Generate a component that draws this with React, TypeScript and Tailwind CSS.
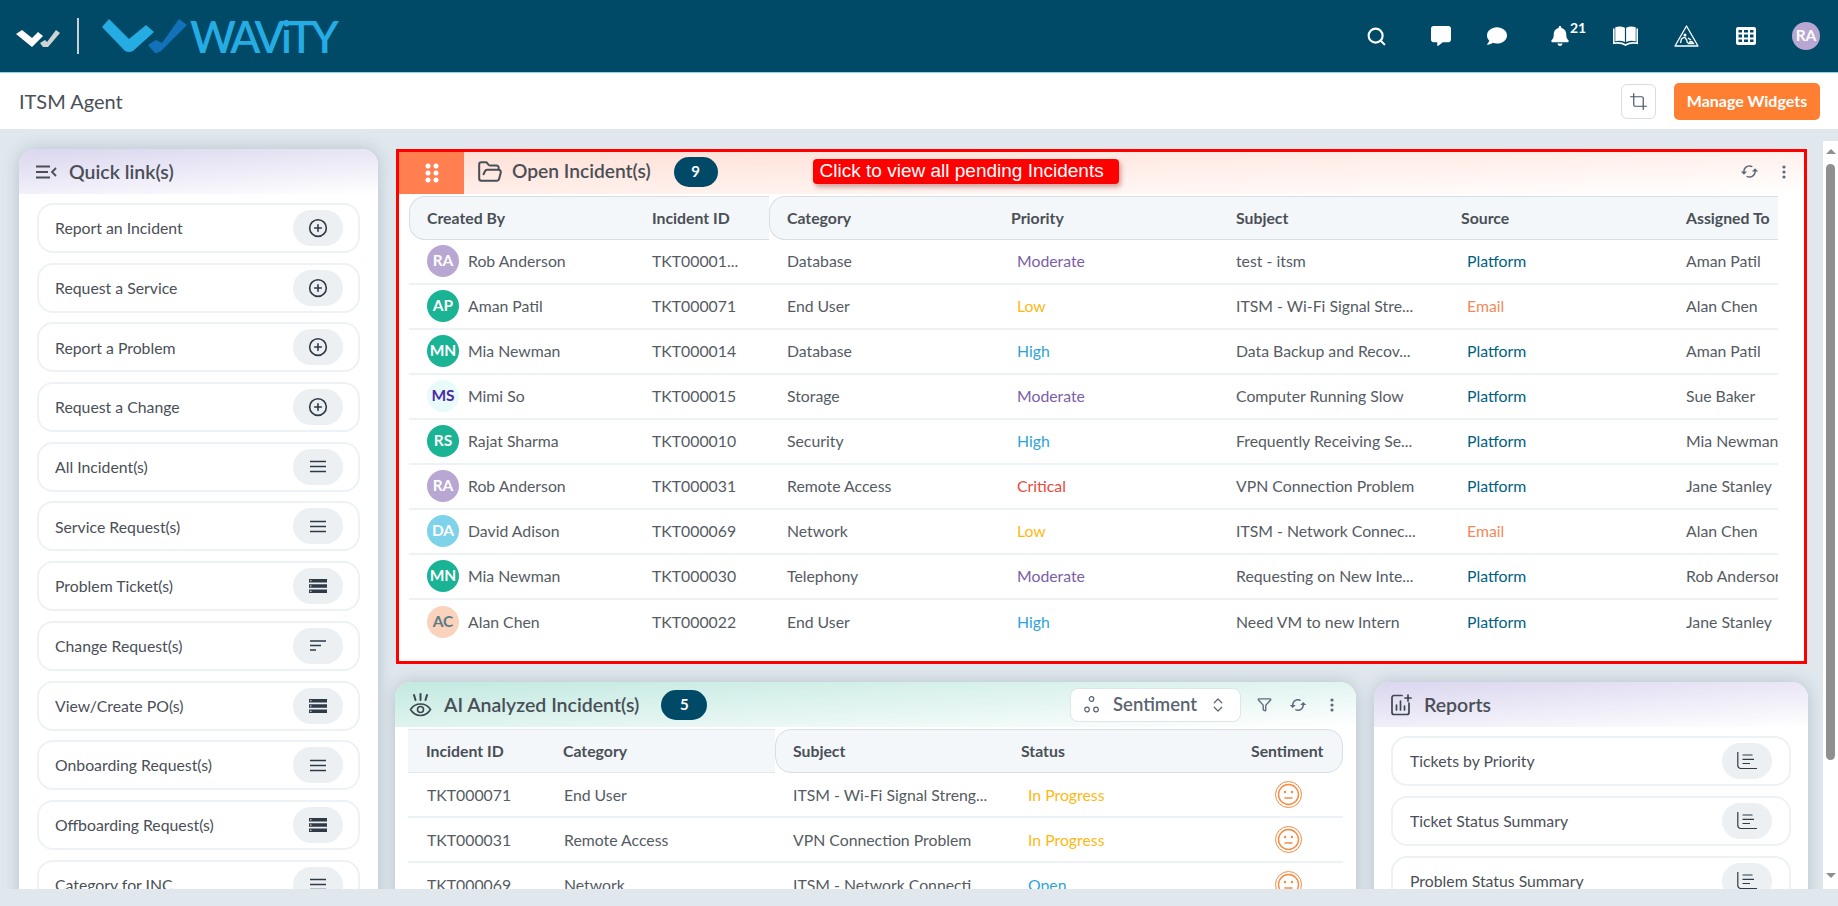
import { ChevronsUpDown, CirclePlus, Crop, Filter, FolderOpen, Search } from "lucide-react";
import { FaBell, FaComment, FaCommentAlt } from "react-icons/fa";
import { MdCached } from "react-icons/md";

type IconKind = "plus" | "menu" | "server" | "sort" | "chart";

const quickLinks: { label: string; icon: IconKind }[] = [
  { label: "Report an Incident", icon: "plus" },
  { label: "Request a Service", icon: "plus" },
  { label: "Report a Problem", icon: "plus" },
  { label: "Request a Change", icon: "plus" },
  { label: "All Incident(s)", icon: "menu" },
  { label: "Service Request(s)", icon: "menu" },
  { label: "Problem Ticket(s)", icon: "server" },
  { label: "Change Request(s)", icon: "sort" },
  { label: "View/Create PO(s)", icon: "server" },
  { label: "Onboarding Request(s)", icon: "menu" },
  { label: "Offboarding Request(s)", icon: "server" },
  { label: "Category for INC", icon: "menu" },
];

const avatarStyles: Record<string, string> = {
  RA: "bg-[#b7a7d2] text-white",
  AP: "bg-[#1ab394] text-white",
  MN: "bg-[#1ab394] text-white",
  RS: "bg-[#1ab394] text-white",
  MS: "bg-[#e8fbfa] text-[#4b2aa5]",
  DA: "bg-[#7ed3ea] text-white",
  AC: "bg-[#fbd3bd] text-[#5d7a86]",
};

const priorityColors: Record<string, string> = {
  Moderate: "text-[#7b5ea7]",
  Low: "text-[#fdb913]",
  High: "text-[#2fa3d9]",
  Critical: "text-[#e64a3e]",
};

const incidents = [
  ["RA", "Rob Anderson", "TKT00001...", "Database", "Moderate", "test - itsm", "Platform", "Aman Patil"],
  ["AP", "Aman Patil", "TKT000071", "End User", "Low", "ITSM - Wi-Fi Signal Stre...", "Email", "Alan Chen"],
  ["MN", "Mia Newman", "TKT000014", "Database", "High", "Data Backup and Recov...", "Platform", "Aman Patil"],
  ["MS", "Mimi So", "TKT000015", "Storage", "Moderate", "Computer Running Slow", "Platform", "Sue Baker"],
  ["RS", "Rajat Sharma", "TKT000010", "Security", "High", "Frequently Receiving Se...", "Platform", "Mia Newman"],
  ["RA", "Rob Anderson", "TKT000031", "Remote Access", "Critical", "VPN Connection Problem", "Platform", "Jane Stanley"],
  ["DA", "David Adison", "TKT000069", "Network", "Low", "ITSM - Network Connec...", "Email", "Alan Chen"],
  ["MN", "Mia Newman", "TKT000030", "Telephony", "Moderate", "Requesting on New Inte...", "Platform", "Rob Anderson"],
  ["AC", "Alan Chen", "TKT000022", "End User", "High", "Need VM to new Intern", "Platform", "Jane Stanley"],
];

const analyzed = [
  ["TKT000071", "End User", "ITSM - Wi-Fi Signal Streng...", "In Progress"],
  ["TKT000031", "Remote Access", "VPN Connection Problem", "In Progress"],
  ["TKT000069", "Network", "ITSM - Network Connecti...", "Open"],
];

const reports = ["Tickets by Priority", "Ticket Status Summary", "Problem Status Summary"];

function MenuIcon() {
  return (
    <svg width="16" height="13" viewBox="0 0 16 13" stroke="#2f3a47" strokeWidth="1.6">
      <path d="M0 1.500h16M0 6.500h16M0 11.500h16" />
    </svg>
  );
}

function ServerIcon() {
  return (
    <svg width="18" height="14" viewBox="0 0 18 14" fill="#2f3a47">
      <path d="M0 0h18v3.600H0zM0 5.200h18v3.600H0zM0 10.400h18V14H0z" />
      <path d="M1 1.300h1.500v1H1zM1 6.500h1.500v1H1zM1 11.700h1.500v1H1z" fill="#ecf0f3" />
    </svg>
  );
}

function SortIcon() {
  return (
    <svg width="16" height="11" viewBox="0 0 16 11" stroke="#2f3a47" strokeWidth="1.500">
      <path d="M0 1h16M0 5.500h11M0 10h6" />
    </svg>
  );
}

function ChartIcon() {
  return (
    <svg width="20" height="18" viewBox="0 0 20 18" fill="none" stroke="#2f3a47" strokeWidth="1.200">
      <path d="M.8 0v13.500a3 3 0 0 0 3 3H20" />
      <path d="M5.500 3h10M5.500 7.300h11.500M5.500 11.500h7.500" />
    </svg>
  );
}

function PillIcon({ kind }: { kind: IconKind }) {
  return (
    <span className="flex h-[36px] w-[50px] items-center justify-center rounded-[18px] bg-[#ecf0f3] text-[#2f3a47]">
      {kind === "plus" && <CirclePlus size={20} strokeWidth={1.9} />}
      {kind === "menu" && <MenuIcon />}
      {kind === "server" && <ServerIcon />}
      {kind === "sort" && <SortIcon />}
      {kind === "chart" && <ChartIcon />}
    </span>
  );
}

function LinkItem({ label, icon, pad }: { label: string; icon: IconKind; pad: string }) {
  return (
    <div className={`flex h-[50px] shrink-0 items-center justify-between rounded-[16px] border-2 border-[#edf2f6] bg-white ${pad}`}>
      <span className="text-[15.8px] text-[#4a4f57]">{label}</span>
      <PillIcon kind={icon} />
    </div>
  );
}

function Kebab() {
  return (
    <svg width="4" height="14" viewBox="0 0 4 14" fill="#5c6b7a">
      <circle cx="2" cy="2" r="1.600" />
      <circle cx="2" cy="7" r="1.600" />
      <circle cx="2" cy="12" r="1.600" />
    </svg>
  );
}

function CountBadge({ value, width }: { value: number; width: string }) {
  return (
    <span className={`flex h-[30px] items-center justify-center rounded-[15px] bg-[#004a68] text-[15px] font-bold text-white ${width}`}>
      {value}
    </span>
  );
}

function Logo() {
  return (
    <div className="flex items-center">
      <svg width="44" height="18" viewBox="0 0 44 18" className="mt-[3px] ml-[16px]">
        <path d="M0 5l6-4 10 8 6-6 5 4-11 11z" fill="#ffffff" />
        <path d="M24 14l5-3 2 2 9-12 4 3-12 14h-5z" fill="#d0d3d4" />
      </svg>
      <div className="ml-[17px] h-[36px] w-[2px] bg-[#c9cfd2]" />
      <svg width="86" height="36" viewBox="0 0 86 36" className="ml-[22px]">
        <path d="M1 9l7-8 20 20L45 7l8 7-21 19q-4 2-8 0z" fill="#25ace3" />
        <path d="M47 27l8-5 6 3L78 1l8 6-26 26q-3 2-6 2z" fill="#1272b9" />
      </svg>
      <span className="ml-[3px] text-[44px] leading-none font-semibold tracking-[-3.6px] text-[#25ace3]">WAViTY</span>
    </div>
  );
}

function TopIcons() {
  return (
    <div className="ml-auto flex items-center text-white">
      <Search size={21} strokeWidth={2.4} />
      <FaCommentAlt size={20} className="ml-[44px]" />
      <FaComment size={20} className="ml-[36px]" />
      <span className="relative ml-[43px]">
        <FaBell size={20} />
        <span className="absolute top-[-5px] left-[20px] text-[14px] leading-none font-bold">21</span>
      </span>
      <svg width="25" height="20" viewBox="0 0 25 20" className="ml-[43px]">
        <path d="M2.300 1.200Q7.500 -.3 11.900 1.800v14.200Q7.500 13.900 2.300 15.300zM22.700 1.200Q17.500 -.3 13.100 1.800v14.200Q17.500 13.900 22.700 15.300z" fill="white" />
        <path d="M.8 2.500v14.800Q7.500 16 12.500 19q5-3 11.700-1.700V2.500" fill="none" stroke="white" strokeWidth="1.600" />
      </svg>
      <svg width="25" height="22" viewBox="0 0 25 22" fill="none" stroke="white" strokeWidth="1.300" className="ml-[36px]">
        <path d="M12.500 1 24 21H1z" strokeLinejoin="round" />
        <circle cx="11" cy="10" r="1.500" fill="white" stroke="none" />
        <path d="M10.500 12l-3 2-1 4M10.500 12l2 2.500 1 3.500M14 13l3 2M14.500 18.500q2.500-4 5 0z" />
      </svg>
      <svg width="20" height="18" viewBox="0 0 20 18" fill="white" className="ml-[37px]">
        <path fillRule="evenodd" d="M2 0h16a2 2 0 0 1 2 2v14a2 2 0 0 1-2 2H2a2 2 0 0 1-2-2V2a2 2 0 0 1 2-2zM2.500 3v2.500H6V3zm5.500 0v2.500h4V3zm6 0v2.500h3.500V3zM2.500 7.500v3H6v-3zm5.500 0v3h4v-3zm6 0v3h3.500v-3zM2.500 12.500V15H6v-2.500zm5.500 0V15h4v-2.500zm6 0V15h3.500v-2.500z" />
      </svg>
      <span className="mr-[18px] ml-[36px] flex h-[28px] w-[28px] items-center justify-center rounded-full bg-[#b7a7d2] text-[15.5px] font-bold">
        RA
      </span>
    </div>
  );
}

function OpenIncidents() {
  return (
    <section className="h-[515px] w-[1411px] shrink-0 border-[3px] border-[#f00] bg-white">
      <div className="flex h-[42px] items-center bg-[linear-gradient(178deg,#ffdfd5,#ffffff)] text-[#4a4f57]">
        <span className="flex h-full w-[65px] items-center justify-center bg-[#ff7f50]">
          <svg width="14" height="20" viewBox="0 0 14 20" fill="white">
            <circle cx="3" cy="3" r="2.500" />
            <circle cx="11" cy="3" r="2.500" />
            <circle cx="3" cy="10" r="2.500" />
            <circle cx="11" cy="10" r="2.500" />
            <circle cx="3" cy="17" r="2.500" />
            <circle cx="11" cy="17" r="2.500" />
          </svg>
        </span>
        <div className="mb-[3px] flex flex-1 items-center">
          <FolderOpen size={26} strokeWidth={1.9} className="ml-[13px]" />
          <span className="ml-[9px] text-[19.2px] font-semibold">Open Incident(s)</span>
          <span className="ml-[23px]">
            <CountBadge value={9} width="w-[44px]" />
          </span>
          <span className="ml-[95px] flex h-[25px] w-[306px] items-center rounded-[4px] bg-[#f00] pl-[7px] font-['Liberation_Sans',sans-serif] text-[19px] whitespace-nowrap text-white shadow-[2px_3px_5px_rgba(120,0,0,0.35)]">
            Click to view all pending Incidents
          </span>
          <span className="ml-auto flex items-center text-[#5c6b7a]">
            <MdCached size={19} />
            <span className="mr-[18px] ml-[23px] flex">
              <Kebab />
            </span>
          </span>
        </div>
      </div>
      <div className="mt-[2px] ml-[10px] w-[1369px] overflow-hidden">
        <div className="flex h-[44px] text-[15.8px] font-bold text-[#4a4f57]">
          <div className="grid w-[360px] grid-cols-[224px_136px] items-center rounded-l-[16px] border-y border-l border-[#d8dee2] bg-[#f4f7f9]">
            <span className="pl-[17px]">Created By</span>
            <span className="pl-[18px]">Incident ID</span>
          </div>
          <div className="grid w-[1009px] grid-cols-[223px_225px_225px_226px_110px] items-center rounded-l-[16px] border-y border-l border-[#d8dee2] bg-[#f4f7f9]">
            <span className="pl-[17px]">Category</span>
            <span className="pl-[18px]">Priority</span>
            <span className="pl-[18px]">Subject</span>
            <span className="pl-[18px]">Source</span>
            <span className="pl-[17px]">Assigned To</span>
          </div>
        </div>
        {incidents.map(([initials, name, id, category, priority, subject, source, assignee], i) => (
          <div
            key={id + i}
            className={`grid h-[45px] grid-cols-[224px_136px_223px_225px_225px_226px_110px] items-center pb-[2px] text-[15.8px] text-[#555b63] ${i < incidents.length - 1 ? "border-b-2 border-[#edf2f6]" : ""}`}
          >
            <span className="flex items-center pl-[18px]">
              <span className={`flex h-[32px] w-[32px] items-center justify-center rounded-full text-[15.5px] font-bold ${avatarStyles[initials]}`}>
                {initials}
              </span>
              <span className="ml-[9px]">{name}</span>
            </span>
            <span className="pl-[19px]">{id}</span>
            <span className="pl-[18px]">{category}</span>
            <span className={`pl-[25px] ${priorityColors[priority]}`}>{priority}</span>
            <span className="pl-[19px]">{subject}</span>
            <span className={`pl-[25px] ${source === "Email" ? "text-[#f08a5d]" : "text-[#00607f]"}`}>{source}</span>
            <span className="pl-[18px] whitespace-nowrap">{assignee}</span>
          </div>
        ))}
      </div>
    </section>
  );
}

function NeutralFace() {
  return (
    <svg width="27" height="27" viewBox="0 0 27 27" fill="none" stroke="#f58a42">
      <circle cx="13.500" cy="13.500" r="13" strokeWidth="1" />
      <circle cx="13.500" cy="13.500" r="10" strokeWidth="1.400" />
      <circle cx="10" cy="11" r="1.200" fill="#f58a42" stroke="none" />
      <circle cx="17" cy="11" r="1.200" fill="#f58a42" stroke="none" />
      <path d="M9.500 17h8" strokeWidth="1.500" />
    </svg>
  );
}

function AiAnalyzed() {
  return (
    <section className="h-[260px] w-[961px] shrink-0 rounded-t-[16px] bg-white shadow-[0_0_16px_rgba(60,80,90,0.25)]">
      <div className="flex h-[45px] items-center rounded-t-[16px] bg-[linear-gradient(177deg,#c2e9e0,#ffffff)] text-[#4a4f57]">
        <svg width="23" height="24" viewBox="0 0 23 24" fill="none" stroke="#3e4650" strokeWidth="1.600" strokeLinecap="round" className="ml-[14px]">
          <path d="M1.500 16.500C4 12.500 7.500 11 11.500 11s7.500 1.500 10 5.500C19 20.500 15.500 22.500 11.500 22.500s-7.500-2-10-6z" />
          <circle cx="11.500" cy="16.500" r="3" />
          <path d="M5 2l1.500 5M11.500 1v6M18 2l-1.500 5" strokeWidth="2" />
        </svg>
        <span className="ml-[12px] text-[19.5px] font-semibold">AI Analyzed Incident(s)</span>
        <span className="ml-[22px]">
          <CountBadge value={5} width="w-[46px]" />
        </span>
        <div className="ml-auto flex h-[34px] w-[171px] items-center rounded-[8px] border border-[#dfe5ea] bg-white pl-[13px] text-[#5a6470]">
          <svg width="15" height="17" viewBox="0 0 15 17" fill="none" stroke="#5a6470" strokeWidth="1.200">
            <circle cx="7.500" cy="3" r="2.300" />
            <circle cx="3" cy="13.500" r="2.300" />
            <circle cx="12" cy="13.500" r="2.300" />
          </svg>
          <span className="ml-[14px] text-[18.5px] font-semibold">Sentiment</span>
          <ChevronsUpDown size={18} strokeWidth={1.600} className="ml-[12px]" />
        </div>
        <Filter size={15} strokeWidth={2.200} className="ml-[16px] text-[#5c6b7a]" />
        <MdCached size={18} className="ml-[17px] text-[#5c6b7a]" />
        <span className="mr-[22px] ml-[23px] flex">
          <Kebab />
        </span>
      </div>
      <div className="mt-[2px] ml-[13px] w-[935px]">
        <div className="flex h-[44px] text-[15.8px] font-bold text-[#4a4f57]">
          <div className="grid w-[367px] grid-cols-[137px_230px] items-center border-y border-[#e3e8ec] bg-[#f4f7f9]">
            <span className="pl-[18px]">Incident ID</span>
            <span className="pl-[18px]">Category</span>
          </div>
          <div className="grid w-[568px] grid-cols-[228px_230px_110px] items-center rounded-[16px] border border-[#d8dee2] bg-[#f4f7f9]">
            <span className="pl-[17px]">Subject</span>
            <span className="pl-[17px]">Status</span>
            <span className="pl-[17px]">Sentiment</span>
          </div>
        </div>
        {analyzed.map(([id, category, subject, status]) => (
          <div key={id} className="grid h-[45px] grid-cols-[137px_230px_228px_230px_110px] items-center border-b-2 border-[#edf2f6] text-[15.8px] text-[#555b63]">
            <span className="pl-[19px]">{id}</span>
            <span className="pl-[19px]">{category}</span>
            <span className="pl-[18px]">{subject}</span>
            <span className={`pl-[25px] ${status === "Open" ? "text-[#2fa3d9]" : "text-[#fdb913]"}`}>{status}</span>
            <span className="flex justify-center">
              <NeutralFace />
            </span>
          </div>
        ))}
      </div>
    </section>
  );
}

function Reports() {
  return (
    <section className="h-[260px] w-[434px] shrink-0 rounded-t-[16px] bg-white shadow-[0_0_16px_rgba(60,80,90,0.25)]">
      <div className="flex h-[45px] items-center rounded-t-[16px] bg-[linear-gradient(176deg,#dad6ef,#ffffff)] text-[#4a4f57]">
        <svg width="21" height="22" viewBox="0 0 21 22" fill="none" stroke="#3e4650" strokeWidth="1.700" strokeLinecap="round" className="ml-[17px]">
          <path d="M11 1.500H3A2 2 0 0 0 1 3.500v15a2 2 0 0 0 2 2h13a2 2 0 0 0 2-2V9" />
          <path d="M5.500 16V11M9.500 16V7M13.500 16v-4" />
          <path d="M17 1v6M14 4h6" />
        </svg>
        <span className="ml-[12px] text-[19.5px] font-semibold">Reports</span>
      </div>
      <div className="flex flex-col gap-[10px] px-[17px] pt-[9px]">
        {reports.map((label) => (
          <LinkItem key={label} label={label} icon="chart" pad="pr-[17px] pl-[17px]" />
        ))}
      </div>
    </section>
  );
}

function QuickLinks() {
  return (
    <section className="h-[800px] w-[359px] rounded-t-[16px] bg-white shadow-[0_0_16px_rgba(60,80,90,0.25)]">
      <div className="flex h-[45px] items-center rounded-t-[16px] bg-[linear-gradient(176deg,#dad6ef,#ffffff)] text-[#4a4f57]">
        <svg width="21" height="14" viewBox="0 0 21 14" fill="none" stroke="#4a4f57" strokeWidth="1.800" className="ml-[17px]">
          <path d="M0 1.500h14M0 7h12M0 12.500h14M20 3l-4 4 4 4" />
        </svg>
        <span className="ml-[12px] text-[19.5px] font-semibold">Quick link(s)</span>
      </div>
      <div className="flex flex-col gap-[9.7px] px-[18px] pt-[9px]">
        {quickLinks.map((link) => (
          <LinkItem key={link.label} label={link.label} icon={link.icon} pad="pr-[15px] pl-[16px]" />
        ))}
      </div>
    </section>
  );
}

export default function App() {
  return (
    <div className="flex h-[906px] w-[1838px] flex-col overflow-hidden bg-[#e0e8ee] font-['Lato',sans-serif]">
      <header className="flex h-[73px] shrink-0 items-center border-b border-[#8fd3e8] bg-[#004a68]">
        <Logo />
        <TopIcons />
      </header>
      <div className="flex h-[56px] shrink-0 items-center bg-white pr-[18px] pl-[19px]">
        <h1 className="text-[20px] font-normal text-[#4a4f57]">ITSM Agent</h1>
        <span className="ml-auto flex h-[35px] w-[35px] items-center justify-center rounded-[6px] border border-[#d8dee5] text-[#4a5563]">
          <Crop size={19} strokeWidth={1.500} />
        </span>
        <span className="ml-[18px] flex h-[37px] w-[146px] items-center justify-center rounded-[5px] bg-[#ff7f32] text-[16px] font-bold text-white">
          Manage Widgets
        </span>
      </div>
      <main className="flex h-[760px] shrink-0 overflow-hidden">
        <div className="mt-[20px] ml-[19px]">
          <QuickLinks />
        </div>
        <div className="mt-[20px] ml-[17px] w-[1413px]">
          <div className="pl-px">
            <OpenIncidents />
          </div>
          <div className="mt-[18px] flex gap-[18px]">
            <AiAnalyzed />
            <Reports />
          </div>
        </div>
        <div className="mt-[12px] ml-[15px] flex w-[15px] flex-col items-center bg-white">
          <span className="mt-[8px] h-0 w-0 border-x-[5px] border-b-[5px] border-x-transparent border-b-[#8f8f8f]" />
          <span className="mt-[10px] h-[596px] w-[9px] rounded-[5px] bg-[#8f8f8f]" />
          <span className="mt-[113px] h-0 w-0 border-x-[5px] border-t-[5px] border-x-transparent border-t-[#8f8f8f]" />
        </div>
      </main>
    </div>
  );
}
